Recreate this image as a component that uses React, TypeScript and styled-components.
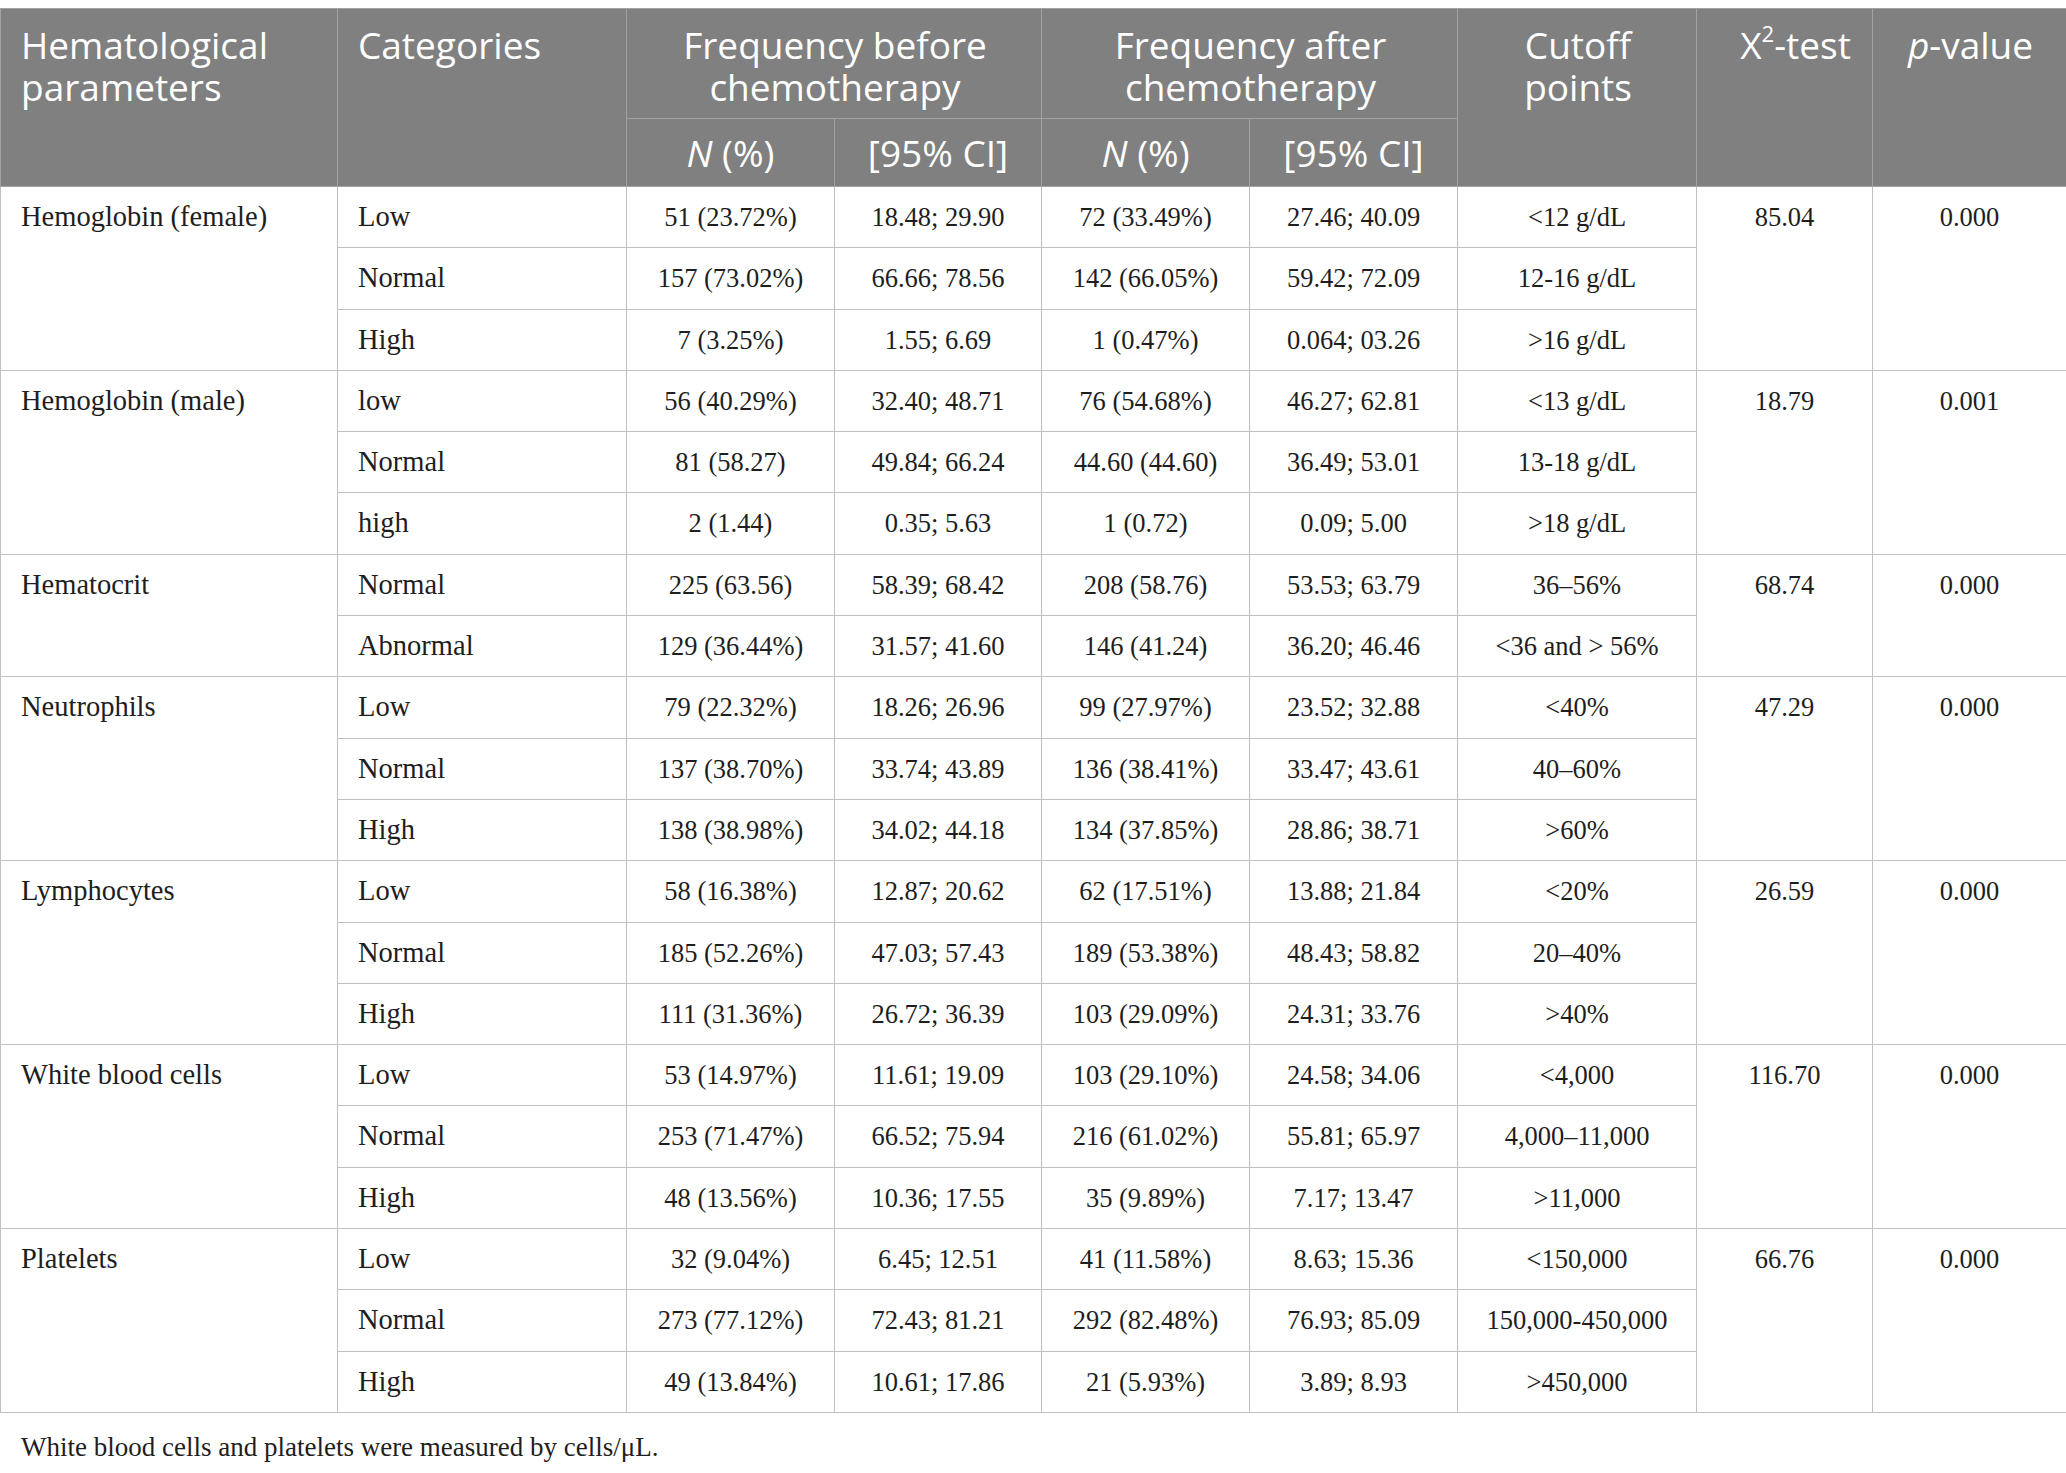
import React from 'react';
import styled, { createGlobalStyle } from 'styled-components';

type Row = {
  category: string;
  before: string;
  beforeCi: string;
  after: string;
  afterCi: string;
  cutoff: string;
};

type Group = {
  parameter: string;
  chi: string;
  p: string;
  rows: Row[];
};

const groups: Group[] = [
  {
    parameter: 'Hemoglobin (female)',
    chi: '85.04',
    p: '0.000',
    rows: [
      { category: 'Low', before: '51 (23.72%)', beforeCi: '18.48; 29.90', after: '72 (33.49%)', afterCi: '27.46; 40.09', cutoff: '<12 g/dL' },
      { category: 'Normal', before: '157 (73.02%)', beforeCi: '66.66; 78.56', after: '142 (66.05%)', afterCi: '59.42; 72.09', cutoff: '12-16 g/dL' },
      { category: 'High', before: '7 (3.25%)', beforeCi: '1.55; 6.69', after: '1 (0.47%)', afterCi: '0.064; 03.26', cutoff: '>16 g/dL' },
    ],
  },
  {
    parameter: 'Hemoglobin (male)',
    chi: '18.79',
    p: '0.001',
    rows: [
      { category: 'low', before: '56 (40.29%)', beforeCi: '32.40; 48.71', after: '76 (54.68%)', afterCi: '46.27; 62.81', cutoff: '<13 g/dL' },
      { category: 'Normal', before: '81 (58.27)', beforeCi: '49.84; 66.24', after: '44.60 (44.60)', afterCi: '36.49; 53.01', cutoff: '13-18 g/dL' },
      { category: 'high', before: '2 (1.44)', beforeCi: '0.35; 5.63', after: '1 (0.72)', afterCi: '0.09; 5.00', cutoff: '>18 g/dL' },
    ],
  },
  {
    parameter: 'Hematocrit',
    chi: '68.74',
    p: '0.000',
    rows: [
      { category: 'Normal', before: '225 (63.56)', beforeCi: '58.39; 68.42', after: '208 (58.76)', afterCi: '53.53; 63.79', cutoff: '36–56%' },
      { category: 'Abnormal', before: '129 (36.44%)', beforeCi: '31.57; 41.60', after: '146 (41.24)', afterCi: '36.20; 46.46', cutoff: '<36 and > 56%' },
    ],
  },
  {
    parameter: 'Neutrophils',
    chi: '47.29',
    p: '0.000',
    rows: [
      { category: 'Low', before: '79 (22.32%)', beforeCi: '18.26; 26.96', after: '99 (27.97%)', afterCi: '23.52; 32.88', cutoff: '<40%' },
      { category: 'Normal', before: '137 (38.70%)', beforeCi: '33.74; 43.89', after: '136 (38.41%)', afterCi: '33.47; 43.61', cutoff: '40–60%' },
      { category: 'High', before: '138 (38.98%)', beforeCi: '34.02; 44.18', after: '134 (37.85%)', afterCi: '28.86; 38.71', cutoff: '>60%' },
    ],
  },
  {
    parameter: 'Lymphocytes',
    chi: '26.59',
    p: '0.000',
    rows: [
      { category: 'Low', before: '58 (16.38%)', beforeCi: '12.87; 20.62', after: '62 (17.51%)', afterCi: '13.88; 21.84', cutoff: '<20%' },
      { category: 'Normal', before: '185 (52.26%)', beforeCi: '47.03; 57.43', after: '189 (53.38%)', afterCi: '48.43; 58.82', cutoff: '20–40%' },
      { category: 'High', before: '111 (31.36%)', beforeCi: '26.72; 36.39', after: '103 (29.09%)', afterCi: '24.31; 33.76', cutoff: '>40%' },
    ],
  },
  {
    parameter: 'White blood cells',
    chi: '116.70',
    p: '0.000',
    rows: [
      { category: 'Low', before: '53 (14.97%)', beforeCi: '11.61; 19.09', after: '103 (29.10%)', afterCi: '24.58; 34.06', cutoff: '<4,000' },
      { category: 'Normal', before: '253 (71.47%)', beforeCi: '66.52; 75.94', after: '216 (61.02%)', afterCi: '55.81; 65.97', cutoff: '4,000–11,000' },
      { category: 'High', before: '48 (13.56%)', beforeCi: '10.36; 17.55', after: '35 (9.89%)', afterCi: '7.17; 13.47', cutoff: '>11,000' },
    ],
  },
  {
    parameter: 'Platelets',
    chi: '66.76',
    p: '0.000',
    rows: [
      { category: 'Low', before: '32 (9.04%)', beforeCi: '6.45; 12.51', after: '41 (11.58%)', afterCi: '8.63; 15.36', cutoff: '<150,000' },
      { category: 'Normal', before: '273 (77.12%)', beforeCi: '72.43; 81.21', after: '292 (82.48%)', afterCi: '76.93; 85.09', cutoff: '150,000-450,000' },
      { category: 'High', before: '49 (13.84%)', beforeCi: '10.61; 17.86', after: '21 (5.93%)', afterCi: '3.89; 8.93', cutoff: '>450,000' },
    ],
  },
];

const colWidths = [337, 289, 208, 207, 208, 208, 239, 176, 194];

const App = () => {
  return (
    <Page>
      <GlobalStyle />
      <Table>
        <colgroup>
          {colWidths.map((w, i) => (
            <col key={i} style={{ width: w }} />
          ))}
        </colgroup>
        <thead>
          <TopHeadRow>
            <Th rowSpan={2} $align="left">
              Hematological parameters
            </Th>
            <Th rowSpan={2} $align="left">
              Categories
            </Th>
            <Th colSpan={2}>Frequency before chemotherapy</Th>
            <Th colSpan={2}>Frequency after chemotherapy</Th>
            <Th rowSpan={2}>Cutoff points</Th>
            <Th rowSpan={2} $padLeft={40}>
              X<sup>2</sup>-test
            </Th>
            <Th rowSpan={2}>
              <i>p</i>-value
            </Th>
          </TopHeadRow>
          <SubHeadRow>
            <SubTh>
              <i>N</i> (%)
            </SubTh>
            <SubTh>[95% CI]</SubTh>
            <SubTh>
              <i>N</i> (%)
            </SubTh>
            <SubTh>[95% CI]</SubTh>
          </SubHeadRow>
        </thead>
        <tbody>
          {groups.map((group) =>
            group.rows.map((row, i) => (
              <BodyRow key={group.parameter + row.category}>
                {i === 0 && (
                  <LabelTd rowSpan={group.rows.length}>{group.parameter}</LabelTd>
                )}
                <LabelTd>{row.category}</LabelTd>
                <Td>{row.before}</Td>
                <Td>{row.beforeCi}</Td>
                <Td>{row.after}</Td>
                <Td>{row.afterCi}</Td>
                <Td>{row.cutoff}</Td>
                {i === 0 && <Td rowSpan={group.rows.length}>{group.chi}</Td>}
                {i === 0 && <Td rowSpan={group.rows.length}>{group.p}</Td>}
              </BodyRow>
            ))
          )}
        </tbody>
      </Table>
      <Footnote>White blood cells and platelets were measured by cells/μL.</Footnote>
    </Page>
  );
};

export default App;

const GlobalStyle = createGlobalStyle`
  body {
    margin: 0;
    background: #ffffff;
  }
`;

const Page = styled.div`
  padding-top: 8px;
  width: 2066px;
`;

const Table = styled.table`
  width: 2066px;
  table-layout: fixed;
  border-collapse: collapse;
  border: 1px solid #c4c4c4;
`;

const TopHeadRow = styled.tr`
  height: 110px;
`;

const SubHeadRow = styled.tr`
  height: 68px;
`;

const Th = styled.th<{ $align?: 'left' | 'center'; $padLeft?: number }>`
  background: #808080;
  color: #ffffff;
  font-family: 'Open Sans', Lato, sans-serif;
  font-weight: 400;
  font-size: 37px;
  line-height: 42px;
  text-align: ${(p) => p.$align || 'center'};
  vertical-align: top;
  padding: 15px 18px 0 ${(p) => p.$padLeft ?? 20}px;
  border: 1px solid #a2a2a2;

  sup {
    font-size: 0.6em;
    line-height: 0;
    vertical-align: 0.75em;
  }
`;

const SubTh = styled(Th)`
  vertical-align: middle;
  padding: 0 10px;
`;

const BodyRow = styled.tr`
  height: 61.3px;
`;

const Td = styled.td`
  font-family: 'Liberation Serif', 'Times New Roman', serif;
  font-size: 26.5px;
  line-height: 31px;
  color: #1e1e1e;
  text-align: center;
  vertical-align: top;
  padding: 15px 12px 0;
  border: 1px solid #c0c0c0;
`;

const LabelTd = styled(Td)`
  font-size: 28.5px;
  text-align: left;
  padding: 14px 20px 0;
`;

const Footnote = styled.p`
  margin: 19px 0 0 21px;
  font-family: 'Liberation Serif', 'Times New Roman', serif;
  font-size: 27px;
  line-height: 31px;
  color: #1e1e1e;
`;
